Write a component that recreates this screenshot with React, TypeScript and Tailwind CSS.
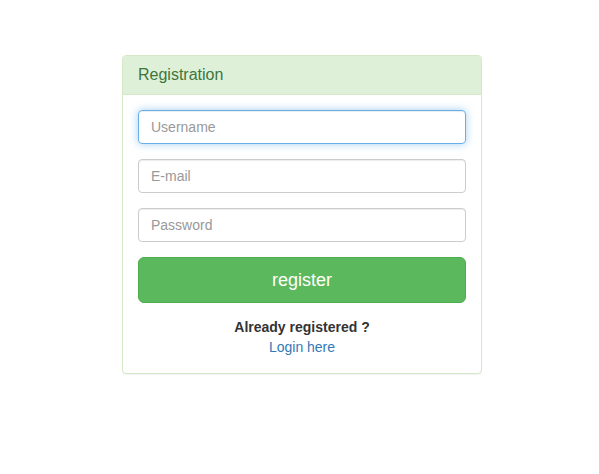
export default function App() {
  return (
    <div className="min-h-screen bg-white font-['Liberation_Sans',Arial,sans-serif] text-[14px] leading-[20px] text-[#333]">
      <div className="flex pl-[122px] pt-[55px]">
        {/* Panel */}
        <div className="w-[360px] rounded-[4px] border border-[#d6e9c6] bg-white shadow-[0_1px_1px_rgba(0,0,0,0.05)]">
          <div className="rounded-t-[3px] border-b border-[#d6e9c6] bg-[#dff0d8] px-[15px] py-[10px] text-[16px] leading-[18px] text-[#3c763d]">
            Registration
          </div>
          <div className="p-[15px]">
            <form className="flex flex-col gap-[15px]" onSubmit={(e) => e.preventDefault()}>
              <input
                autoFocus
                type="text"
                placeholder="Username"
                className="h-[34px] w-full rounded-[4px] border border-[#ccc] px-[12px] py-[6px] text-[14px] text-[#555] placeholder:text-[#999] shadow-[inset_0_1px_1px_rgba(0,0,0,0.075)] outline-none focus:border-[#66afe9] focus:shadow-[inset_0_1px_1px_rgba(0,0,0,0.075),0_0_8px_rgba(102,175,233,0.6)]"
              />
              <input
                type="email"
                placeholder="E-mail"
                className="h-[34px] w-full rounded-[4px] border border-[#ccc] px-[12px] py-[6px] text-[14px] text-[#555] placeholder:text-[#999] shadow-[inset_0_1px_1px_rgba(0,0,0,0.075)] outline-none focus:border-[#66afe9]"
              />
              <input
                type="password"
                placeholder="Password"
                className="h-[34px] w-full rounded-[4px] border border-[#ccc] px-[12px] py-[6px] text-[14px] text-[#555] placeholder:text-[#999] shadow-[inset_0_1px_1px_rgba(0,0,0,0.075)] outline-none focus:border-[#66afe9]"
              />
              <button
                type="submit"
                className="h-[46px] w-full rounded-[6px] border border-[#4cae4c] bg-[#5cb85c] text-[18px] text-white"
              >
                register
              </button>
            </form>
            <div className="mt-[14px] pb-[1px] text-center">
              <div className="font-bold">Already registered ?</div>
              <a href="#" className="text-[#337ab7]">
                Login here
              </a>
            </div>
          </div>
        </div>
      </div>
    </div>
  );
}
